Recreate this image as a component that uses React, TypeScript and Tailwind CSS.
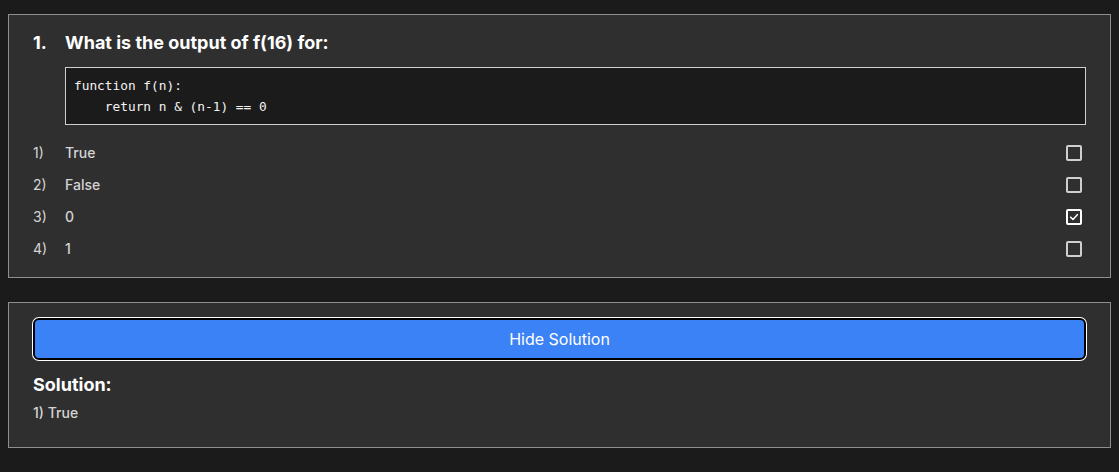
import { useState } from 'react';

const options = ['True', 'False', '0', '1'];

function Checkbox({ checked }: { checked: boolean }) {
  return (
    <div
      className={`w-4 h-4 border-2 rounded-[2px] flex items-center justify-center ${
        checked ? 'border-white' : 'border-[#cfcfcf]'
      }`}
    >
      {checked && (
        <svg viewBox="0 0 12 12" className="w-[10px] h-[10px]" fill="none">
          <path d="M2 6.2 L4.8 9 L10 3.2" stroke="#ffffff" strokeWidth="1.8" strokeLinecap="round" strokeLinejoin="round" />
        </svg>
      )}
    </div>
  );
}

export default function App() {
  const [selected] = useState(2);

  return (
    <div
      className="min-h-[472px] bg-[#1b1b1b] px-2 pt-[14px] pb-6"
      style={{ fontFamily: 'Inter, "Noto Sans", sans-serif' }}
    >
      {/* Question */}
      <div className="bg-[#2f2f2f] border border-[#8f8f8f] px-6 pt-[13px] pb-[12px]">
        <div className="flex items-center h-7 text-[18px] font-bold text-white">
          <span className="w-8">1.</span>
          <span>What is the output of f(16) for:</span>
        </div>
        <div className="ml-8 mt-[11px] bg-[#1b1b1b] border border-[#cfcfcf] px-2 py-[7px]">
          <pre
            className="text-[12.8px] leading-[21px] font-medium text-[#f4f4f4]"
            style={{ fontFamily: '"DejaVu Sans Mono", "Liberation Mono", monospace' }}
          >
{`function f(n):
    return n & (n-1) == 0`}
          </pre>
        </div>
        <div className="mt-[12px]">
          {options.map((opt, i) => (
            <div key={opt} className="flex items-center h-8 text-[14px] leading-5">
              <span className="w-8 text-[#d6d6d6]">{i + 1})</span>
              <span className="flex-1 font-medium text-[#d4d4d4]">{opt}</span>
              <div className="mr-[4px]">
                <Checkbox checked={i === selected} />
              </div>
            </div>
          ))}
        </div>
      </div>

      {/* Solution */}
      <div className="mt-6 bg-[#2f2f2f] border border-[#8f8f8f] px-6 pt-[15px] pb-[24px]">
        <button className="w-full h-[42px] rounded-md bg-[#3b82f6] border-2 border-black ring-1 ring-white text-white text-[16px]">
          Hide Solution
        </button>
        <div className="mt-[11px] text-[18px] leading-7 font-bold text-white">Solution:</div>
        <div className="mt-[4px] text-[14px] leading-5 font-medium text-[#d4d4d4]">1) True</div>
      </div>
    </div>
  );
}
